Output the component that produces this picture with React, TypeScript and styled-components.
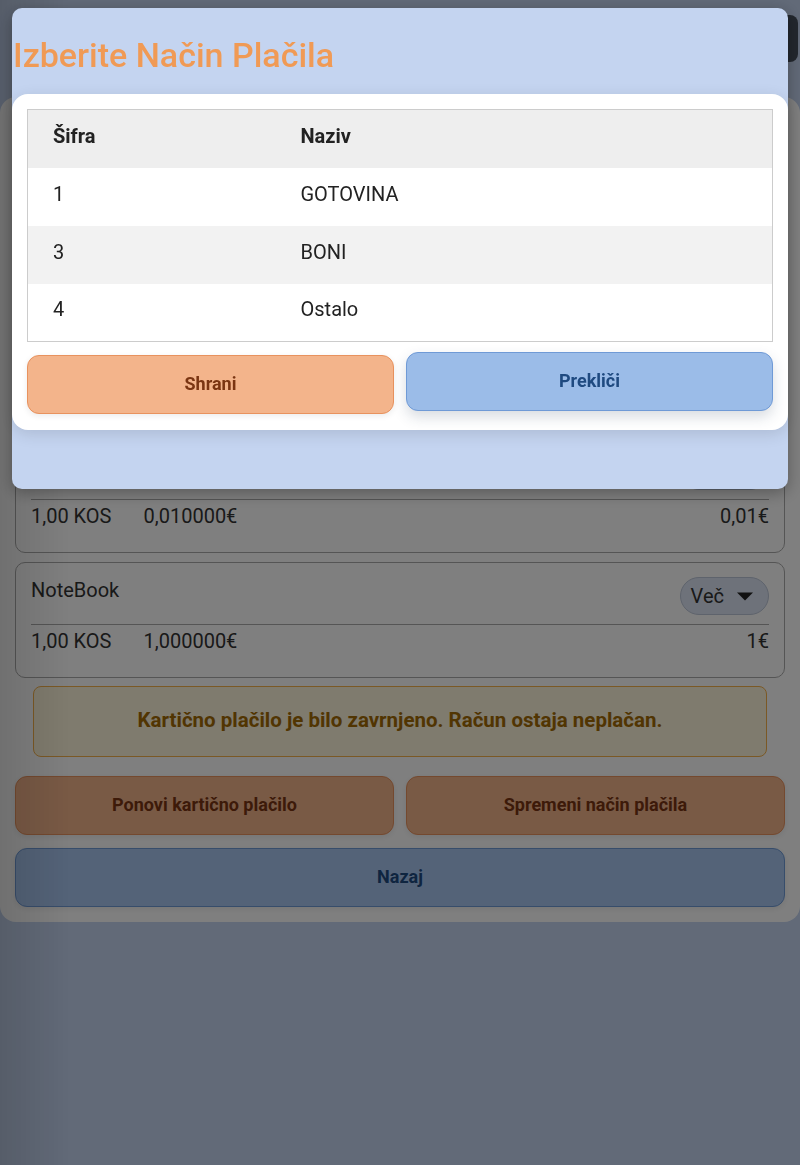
import React from "react";
import styled, { createGlobalStyle } from "styled-components";

const GlobalStyle = createGlobalStyle`
  html, body {
    margin: 0;
    padding: 0;
  }
  body {
    background: #c4d4f0;
    font-family: Roboto, "Noto Sans", "DejaVu Sans", sans-serif;
    color: #333;
  }
  * {
    box-sizing: border-box;
  }
`;

const Page = styled.div`
  min-height: 1165px;
  position: relative;
`;

const TopBar = styled.div`
  height: 97px;
  display: flex;
  justify-content: flex-end;
  padding: 15px 2px 0 0;
`;

const DarkButton = styled.div`
  width: 110px;
  height: 47px;
  border-radius: 8px;
  background: #464f5c;
`;

const Card = styled.div`
  background: #fff;
  border-radius: 16px;
  padding: 15px;
  display: flex;
  flex-direction: column;
`;

// prostor za glavo računa (skrito pod modalnim oknom)
const ReceiptSpacer = styled.div`
  height: 316px;
  margin-bottom: 9px;
`;

const ItemCard = styled.div`
  border: 1px solid #aaa;
  border-radius: 10px;
  padding: 14px 15px 24px;
  & + & {
    margin-top: 9px;
  }
`;

const ItemTop = styled.div`
  display: flex;
  justify-content: space-between;
  align-items: flex-start;
`;

const ItemName = styled.div`
  font-size: 20px;
  line-height: 26px;
  padding-top: 0;
`;

const MoreButton = styled.button`
  height: 38px;
  display: flex;
  align-items: center;
  gap: 13px;
  padding: 0 15px 0 10px;
  border-radius: 19px;
  border: 1px solid #bcc6d8;
  background: #dce4f4;
  color: #333;
  font-family: inherit;
  font-size: 20px;
`;

const Divider = styled.div`
  margin-top: 9px;
  border-top: 1px solid #aaa;
`;

const ItemBottom = styled.div`
  display: flex;
  gap: 32px;
  padding-top: 4px;
  font-size: 20px;
  line-height: 24px;
`;

const Amount = styled.span`
  margin-left: auto;
`;

const Alert = styled.div`
  margin: 8px 18px 0;
  height: 71px;
  display: flex;
  align-items: center;
  justify-content: center;
  padding-bottom: 3px;
  border: 1px solid #f6b24a;
  border-radius: 8px;
  background: #fff6dc;
  color: #a36a04;
  font-size: 20.5px;
  font-weight: 700;
`;

const ButtonRow = styled.div`
  display: grid;
  grid-template-columns: 1fr 1fr;
  gap: 12px;
  margin-top: 19px;
`;

const ActionButton = styled.button<{ $tone: "orange" | "blue"; $raised?: boolean }>`
  height: 59px;
  width: 100%;
  padding-bottom: 3px;
  border-radius: 12px;
  border: 1px solid ${({ $tone }) => ($tone === "orange" ? "#e8925e" : "#6f9ad6")};
  background: ${({ $tone }) => ($tone === "orange" ? "#f3b48b" : "#9bbce8")};
  color: ${({ $tone }) => ($tone === "orange" ? "#7a3512" : "#1f4a80")};
  font-family: inherit;
  font-size: 18px;
  font-weight: 700;
  box-shadow: ${({ $raised }) =>
    $raised ? "0 6px 14px rgba(40, 60, 90, 0.18)" : "0 2px 6px rgba(0, 0, 0, 0.08)"};
  transform: ${({ $raised }) => ($raised ? "translateY(-3px)" : "none")};
`;

const WideButton = styled(ActionButton)`
  margin-top: 13px;
  background: #a8c6f0;
`;

const Overlay = styled.div`
  position: fixed;
  inset: 0;
  background: linear-gradient(to right, rgba(0, 0, 0, 0.56), rgba(0, 0, 0, 0.5) 70px);
`;

const Modal = styled.div`
  position: fixed;
  top: 8px;
  left: 12px;
  right: 12px;
  height: 481px;
  background: #c4d4f0;
  border-radius: 10px;
  box-shadow: 0 4px 16px rgba(0, 0, 0, 0.3);
`;

const ModalTitle = styled.h2`
  margin: 0;
  padding: 27px 0 0 1px;
  height: 86px;
  font-size: 34px;
  line-height: 40px;
  font-weight: 500;
  color: #f09a55;
`;

const Panel = styled.div`
  background: #fff;
  border-radius: 16px;
  padding: 15px 15px 16px;
  box-shadow: 0 4px 16px rgba(0, 0, 0, 0.12);
`;

const Table = styled.table`
  width: 100%;
  border-collapse: collapse;
  border: 1px solid #ccc;
  font-size: 20px;
  color: #222;
`;

const HeadCell = styled.th<{ $narrow?: boolean }>`
  height: 58px;
  padding: 0 25px 5px;
  width: ${({ $narrow }) => ($narrow ? "248px" : "auto")};
  text-align: left;
  font-weight: 700;
  background: #eee;
`;

const Row = styled.tr<{ $shade: boolean }>`
  background: ${({ $shade }) => ($shade ? "#f2f2f2" : "#fff")};
`;

const Cell = styled.td`
  height: 58px;
  padding: 0 25px 6px;
`;

const ModalActions = styled.div`
  display: grid;
  grid-template-columns: 1fr 1fr;
  gap: 12px;
  margin-top: 13px;
`;

const Caret = () => (
  <svg width="16" height="9" viewBox="0 0 16 9">
    <path d="M0 0.5h16l-8 8z" fill="#222" />
  </svg>
);

const items = [
  { name: "Dostava", qty: "1,00 KOS", price: "0,010000€", total: "0,01€" },
  { name: "NoteBook", qty: "1,00 KOS", price: "1,000000€", total: "1€" },
];

const methods = [
  { code: "1", name: "GOTOVINA" },
  { code: "3", name: "BONI" },
  { code: "4", name: "Ostalo" },
];

export default function App() {
  return (
    <>
      <GlobalStyle />
      <Page>
        <TopBar>
          <DarkButton />
        </TopBar>
        <Card>
          <ReceiptSpacer />
          {items.map((item) => (
            <ItemCard key={item.name}>
              <ItemTop>
                <ItemName>{item.name}</ItemName>
                <MoreButton>
                  Več <Caret />
                </MoreButton>
              </ItemTop>
              <Divider />
              <ItemBottom>
                <span>{item.qty}</span>
                <span>{item.price}</span>
                <Amount>{item.total}</Amount>
              </ItemBottom>
            </ItemCard>
          ))}
          <Alert>Kartično plačilo je bilo zavrnjeno. Račun ostaja neplačan.</Alert>
          <ButtonRow>
            <ActionButton $tone="orange">Ponovi kartično plačilo</ActionButton>
            <ActionButton $tone="orange">Spremeni način plačila</ActionButton>
          </ButtonRow>
          <WideButton $tone="blue">Nazaj</WideButton>
        </Card>
        <Overlay />
        <Modal>
          <ModalTitle>Izberite Način Plačila</ModalTitle>
          <Panel>
            <Table>
              <thead>
                <tr>
                  <HeadCell $narrow>Šifra</HeadCell>
                  <HeadCell>Naziv</HeadCell>
                </tr>
              </thead>
              <tbody>
                {methods.map((m, i) => (
                  <Row key={m.code} $shade={i % 2 === 1}>
                    <Cell>{m.code}</Cell>
                    <Cell>{m.name}</Cell>
                  </Row>
                ))}
              </tbody>
            </Table>
            <ModalActions>
              <ActionButton $tone="orange">Shrani</ActionButton>
              <ActionButton $tone="blue" $raised>
                Prekliči
              </ActionButton>
            </ModalActions>
          </Panel>
        </Modal>
      </Page>
    </>
  );
}
